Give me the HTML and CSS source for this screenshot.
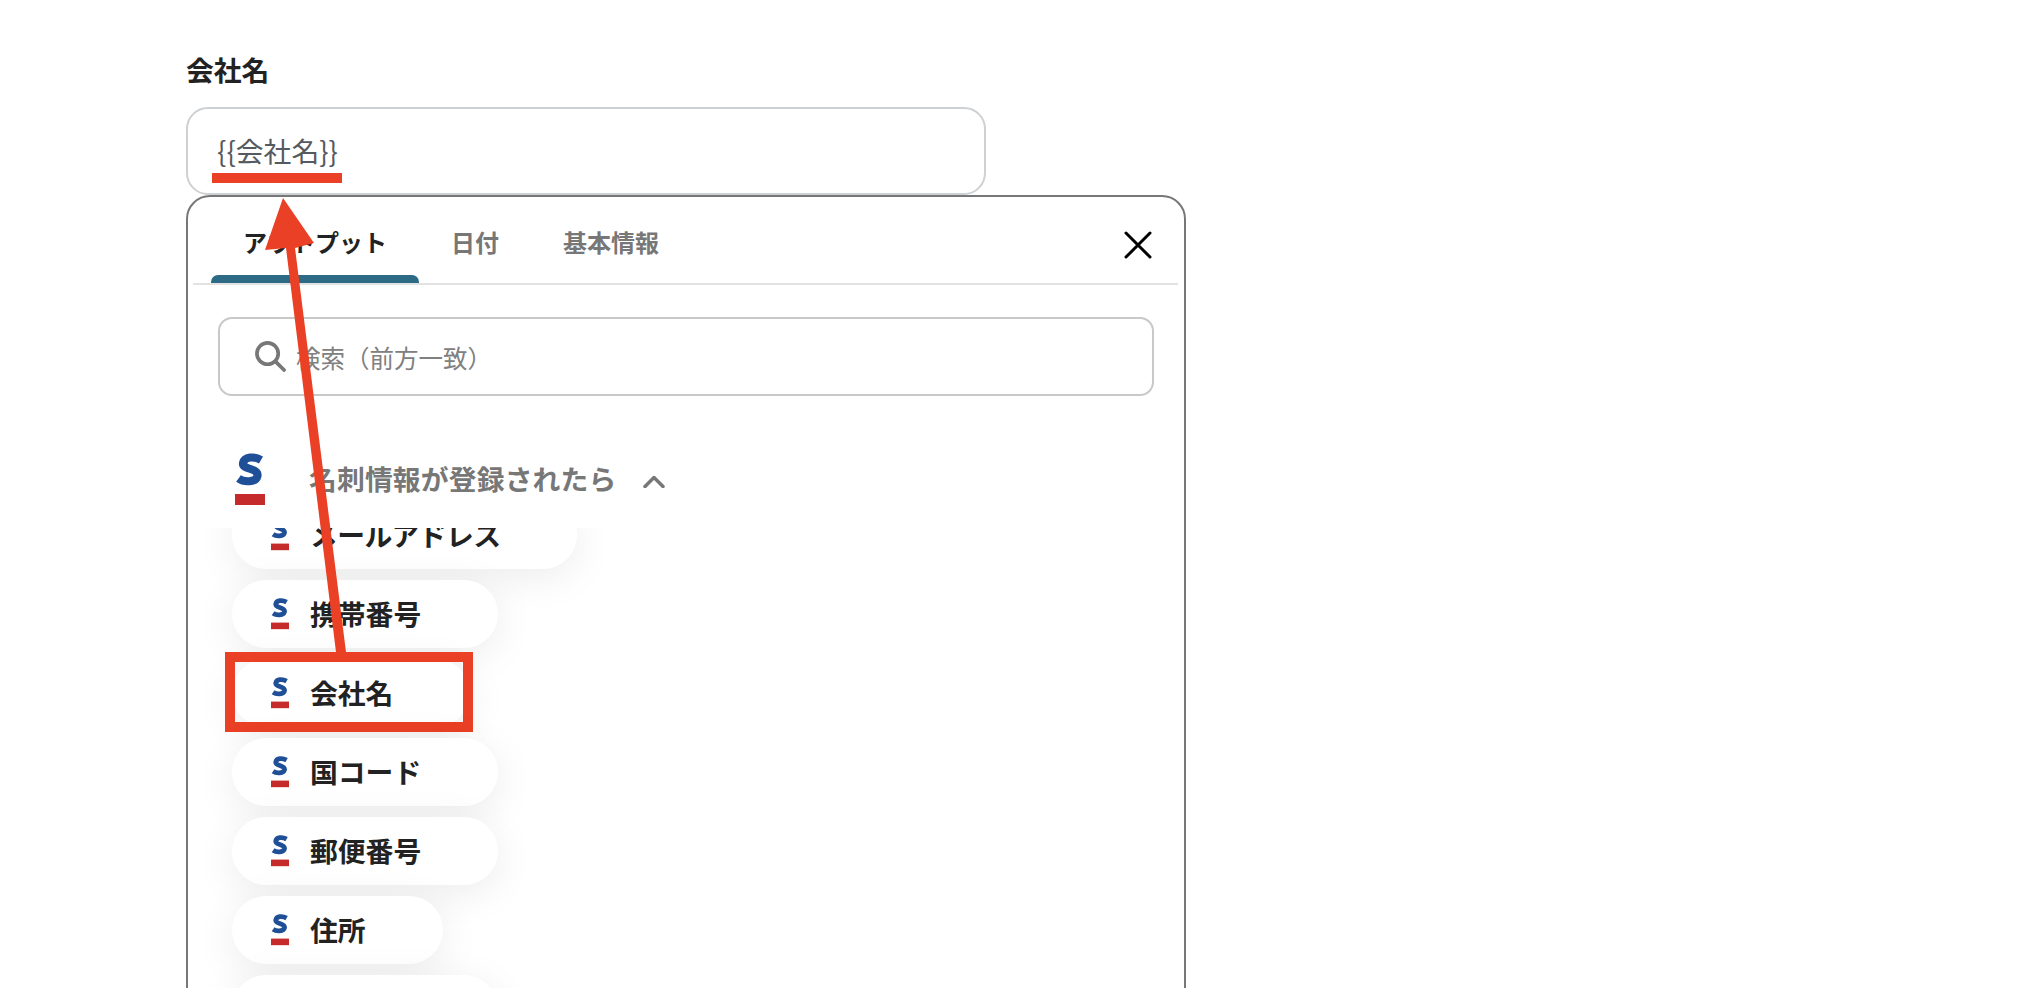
FILE: index.html
```html
<!DOCTYPE html>
<html lang="ja">
<head>
<meta charset="utf-8">
<title>会社名</title>
<link rel="stylesheet" href="styles.css">
</head>
<body>
<main class="page">
  <div class="field-label">会社名</div>
  <div class="field-input">{{会社名}}<span class="input-mark"></span></div>
  <section class="panel">
    <div class="tabs">
      <div class="tab tab-active"><span class="tab-text">アウトプット</span><span class="tab-bar"></span></div>
      <div class="tab"><span class="tab-text">日付</span><span class="tab-bar"></span></div>
      <div class="tab"><span class="tab-text">基本情報</span><span class="tab-bar"></span></div>
      <svg class="close" viewBox="0 0 28 28"><path d="M2 2 L26 26 M26 2 L2 26"/></svg>
    </div>
    <div class="search">
      <svg class="search-icon" viewBox="0 0 32 32"><circle cx="13" cy="13" r="11"/><path d="M21 21 L30 30"/></svg>
      <span class="search-text">検索（前方一致）</span>
    </div>
    <div class="section-head">
      <svg class="logo logo-large" viewBox="0 0 30 52"><path class="logo-s" d="M26 7 C19 3 9.500 3.500 8 10 C6.500 17 24 14.500 22.500 23 C21 29.500 9 29.500 3.500 25.500"/><rect class="logo-bar" x="0" y="41" width="30" height="11"/></svg>
      <span class="section-title">名刺情報が登録されたら</span>
      <svg class="chevron" viewBox="0 0 22 13"><path d="M2 11.500 L11 2.500 L20 11.500"/></svg>
    </div>
    <div class="list-clip">
      <ul class="list">
        <li class="pill pill-kana"><svg class="logo" viewBox="0 0 30 52"><path class="logo-s" d="M26 7 C19 3 9.500 3.500 8 10 C6.500 17 24 14.500 22.500 23 C21 29.500 9 29.500 3.500 25.500"/><rect class="logo-bar" x="0" y="41" width="30" height="11"/></svg>メールアドレス</li>
        <li class="pill"><svg class="logo" viewBox="0 0 30 52"><path class="logo-s" d="M26 7 C19 3 9.500 3.500 8 10 C6.500 17 24 14.500 22.500 23 C21 29.500 9 29.500 3.500 25.500"/><rect class="logo-bar" x="0" y="41" width="30" height="11"/></svg>携帯番号</li>
        <li class="pill"><svg class="logo" viewBox="0 0 30 52"><path class="logo-s" d="M26 7 C19 3 9.500 3.500 8 10 C6.500 17 24 14.500 22.500 23 C21 29.500 9 29.500 3.500 25.500"/><rect class="logo-bar" x="0" y="41" width="30" height="11"/></svg>会社名<span class="pill-mark"></span></li>
        <li class="pill"><svg class="logo" viewBox="0 0 30 52"><path class="logo-s" d="M26 7 C19 3 9.500 3.500 8 10 C6.500 17 24 14.500 22.500 23 C21 29.500 9 29.500 3.500 25.500"/><rect class="logo-bar" x="0" y="41" width="30" height="11"/></svg>国コード</li>
        <li class="pill"><svg class="logo" viewBox="0 0 30 52"><path class="logo-s" d="M26 7 C19 3 9.500 3.500 8 10 C6.500 17 24 14.500 22.500 23 C21 29.500 9 29.500 3.500 25.500"/><rect class="logo-bar" x="0" y="41" width="30" height="11"/></svg>郵便番号</li>
        <li class="pill"><svg class="logo" viewBox="0 0 30 52"><path class="logo-s" d="M26 7 C19 3 9.500 3.500 8 10 C6.500 17 24 14.500 22.500 23 C21 29.500 9 29.500 3.500 25.500"/><rect class="logo-bar" x="0" y="41" width="30" height="11"/></svg>住所</li>
        <li class="pill"><svg class="logo" viewBox="0 0 30 52"><path class="logo-s" d="M26 7 C19 3 9.500 3.500 8 10 C6.500 17 24 14.500 22.500 23 C21 29.500 9 29.500 3.500 25.500"/><rect class="logo-bar" x="0" y="41" width="30" height="11"/></svg>電話番号</li>
      </ul>
    </div>
  </section>
</main>
<svg class="arrow" viewBox="0 0 2024 988"><polygon points="336,652 346,652 295,248 314,243 283,198 265,250 286,248"/></svg>
</body>
</html>
```
FILE: styles.css
```css
* { box-sizing: border-box; }
html, body { margin: 0; height: 988px; overflow: hidden; background: #fff; }
body { position: relative; font-family: "Noto Sans CJK JP", "Noto Sans", sans-serif; color: #222; text-spacing-trim: space-all; }
.page { padding: 49px 0 0 186px; height: 988px; overflow: hidden; }
.field-label { font-size: 27.800px; font-weight: 700; line-height: 40px; height: 40px; margin-bottom: 18px; color: #222; }
.field-input { position: relative; width: 800px; height: 88px; border: 2px solid #cdd1d4; border-radius: 22px; padding: 0 0 0 29px; font-size: 27.800px; line-height: 82px; color: #555a60; }
.input-mark { position: absolute; left: 24px; top: 64px; width: 130px; height: 10px; background: #ea4025; }
.panel { width: 1000px; height: 900px; margin-top: 0; border: 2px solid #777; border-radius: 24px; background: #fff; }
.tabs { display: flex; margin: 0 6px 0 5px; padding: 0 0 0 18px; border-bottom: 2px solid #e2e2e2; height: 88px; }
.tab { display: flex; flex-direction: column; align-items: center; padding: 28px 32px 0; font-size: 24px; font-weight: 700; color: #777; }
.tab-active { color: #222; }
.tab-text { line-height: 34px; height: 34px; }
.tab-bar { align-self: stretch; margin: 16px -32px 0; height: 8px; border-radius: 7px 7px 0 0; }
.tab-active .tab-bar { background: #2d6a85; }
.close { width: 28px; height: 28px; margin: 34px 26px 0 auto; }
.close path { stroke: #000; stroke-width: 3; stroke-linecap: round; fill: none; }
.search { display: flex; align-items: center; margin: 32px 30px 0 30px; height: 79px; border: 2px solid #c8c8c8; border-radius: 14px; padding-left: 35px; }
.search-icon { width: 31px; height: 31px; margin-right: 10px; }
.search-icon circle, .search-icon path { fill: none; stroke: #777; stroke-width: 3.800; stroke-linecap: round; }
.search-text { font-size: 24.500px; margin-top: 2px; color: #808080; }
.section-head { display: flex; align-items: center; height: 98px; margin-top: 34px; padding-left: 47px; background: #fff; }
.logo { display: block; flex: none; width: 18px; height: 31.200px; margin: 2px 21px 0 0; }
.logo-large { width: 30px; height: 52px; margin: 0 44px 0 0; }
.logo-s { fill: none; stroke: #1f4f96; stroke-width: 8; }
.logo-bar { fill: #c52b2b; }
.section-title { font-size: 27.800px; font-weight: 700; line-height: 40px; margin-top: -2px; letter-spacing: 0.150px; color: #777; }
.chevron { width: 22px; height: 13px; margin: 4px 0 0 27px; }
.chevron path { fill: none; stroke: #777; stroke-width: 3.500; stroke-linecap: round; stroke-linejoin: round; }
.list-clip { overflow: hidden; height: 480px; }
.list { list-style: none; margin: -27px 0 0; padding: 0 0 0 44px; display: flex; flex-direction: column; align-items: flex-start; gap: 11px; }
.pill { position: relative; display: flex; align-items: center; height: 68px; padding: 0 77px 2px 39px; border-radius: 34px; background: #fff; box-shadow: 0 8px 40px rgba(0, 0, 0, 0.08); font-size: 27.800px; font-weight: 700; color: #222; }
.pill-kana { letter-spacing: -0.600px; }
.pill-mark { position: absolute; left: -7px; top: -7px; width: 248px; height: 80px; border: 10px solid #ea4025; }
.arrow { position: absolute; left: 0; top: 0; width: 2024px; height: 988px; }
.arrow polygon { fill: #ea4025; }
```
